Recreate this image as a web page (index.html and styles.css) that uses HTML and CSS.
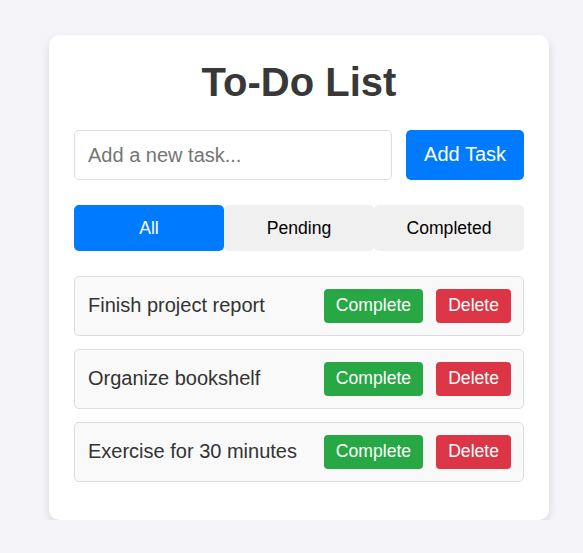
FILE: index.html
```
<!DOCTYPE html>
<html lang="en">
<head>
<meta charset="UTF-8">
<title>To-Do List</title>
<link rel="stylesheet" href="styles.css">
</head>
<body>
<div class="card">
  <h1 class="title">To-Do List</h1>
  <div class="add-row">
    <input class="task-input" type="text" placeholder="Add a new task...">
    <button class="add-btn">Add Task</button>
  </div>
  <div class="filters">
    <button class="filter active">All</button>
    <button class="filter">Pending</button>
    <button class="filter">Completed</button>
  </div>
  <ul class="tasks">
    <li class="task"><span class="task-text">Finish project report</span><div class="actions"><button class="btn complete">Complete</button><button class="btn delete">Delete</button></div></li>
    <li class="task"><span class="task-text">Organize bookshelf</span><div class="actions"><button class="btn complete">Complete</button><button class="btn delete">Delete</button></div></li>
    <li class="task"><span class="task-text">Exercise for 30 minutes</span><div class="actions"><button class="btn complete">Complete</button><button class="btn delete">Delete</button></div></li>
  </ul>
</div>
</body>
</html>
```
FILE: styles.css
```
* { box-sizing: border-box; }
body {
  margin: 0;
  padding: 35px 0 0 49px;
  background: #f4f4f9;
  font-family: "Liberation Sans", Arial, sans-serif;
}
.card {
  width: 500px;
  background: #fff;
  border-radius: 10px;
  box-shadow: 0 4px 10px rgba(0,0,0,0.12);
  padding: 24px 25px 25px;
}
.title {
  margin: 0 0 25px;
  text-align: center;
  font-size: 40px;
  line-height: 46px;
  color: #383838;
}
.add-row {
  display: flex;
  gap: 14px;
  margin-bottom: 25px;
}
.task-input {
  flex: 1;
  height: 50px;
  border: 1px solid #ddd;
  border-radius: 5px;
  padding: 0 13px;
  font-family: inherit;
  font-size: 20px;
  color: #333;
  outline: none;
}
.task-input::placeholder { color: #757575; }
.add-btn {
  height: 50px;
  border: none;
  border-radius: 5px;
  background: #007bff;
  color: #fff;
  font-family: inherit;
  font-size: 20px;
  padding: 0 18px 1px;
}
.filters {
  display: grid;
  grid-template-columns: repeat(3, 1fr);
  margin-bottom: 25px;
}
.filter {
  height: 46px;
  border: none;
  border-radius: 5px;
  background: #f0f0f0;
  color: #000;
  font-family: inherit;
  font-size: 17.6px;
  padding-bottom: 1px;
}
.filter.active { background: #007bff; color: #fff; }
.tasks {
  list-style: none;
  margin: 0;
  padding: 0;
}
.task {
  height: 60px;
  display: flex;
  align-items: center;
  justify-content: space-between;
  margin-bottom: 13px;
  padding: 0 12px 1px 13px;
  background: #f9f9f9;
  border: 1px solid #ddd;
  border-radius: 5px;
}
.task-text { font-size: 20px; color: #333; }
.actions { display: flex; gap: 13px; }
.btn {
  height: 34px;
  border: none;
  border-radius: 4px;
  color: #fff;
  font-family: inherit;
  font-size: 17.6px;
  padding: 0 12px 1px;
}
.complete { background: #28a745; }
.delete { background: #dc3545; }
```
